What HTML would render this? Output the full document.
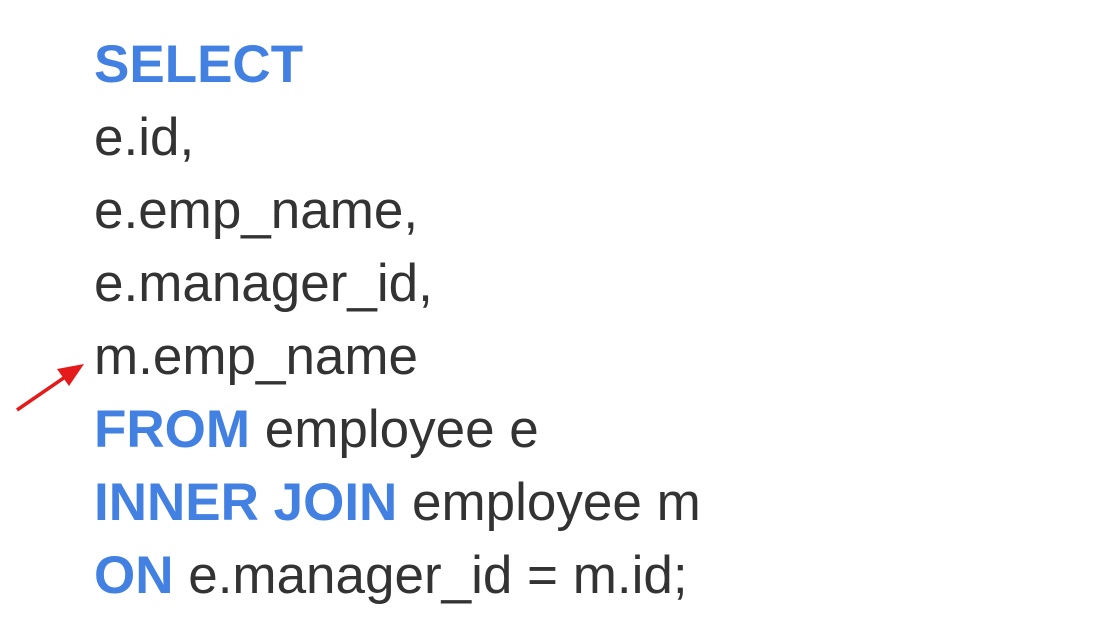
<!DOCTYPE html>
<html><head><style>
html,body{margin:0;padding:0;background:#fff;width:1108px;height:639px;overflow:hidden}
.t{position:absolute;left:94px;font-family:"Liberation Sans",sans-serif;font-size:53px;color:#333;white-space:pre;line-height:1}
.k{color:#4280e2;font-weight:bold}
</style></head><body>
<div class="t" style="top:38px"><span class="k">SELECT</span></div>
<div class="t" style="top:111px">e.id,</div>
<div class="t" style="top:184px">e.emp_name,</div>
<div class="t" style="top:257px">e.manager_id,</div>
<div class="t" style="top:330px">m.emp_name</div>
<div class="t" style="top:403px"><span class="k">FROM</span> employee e</div>
<div class="t" style="top:476px"><span class="k">INNER JOIN</span> employee m</div>
<div class="t" style="top:549px"><span class="k">ON</span> e.manager_id = m.id;</div>
<svg style="position:absolute;left:0;top:0" width="1108" height="639">
<line x1="17" y1="410" x2="68" y2="375" stroke="#e51a1a" stroke-width="3.5"/>
<polygon points="84,364 57,369 69,386" fill="#e51a1a"/>
</svg>
</body></html>
